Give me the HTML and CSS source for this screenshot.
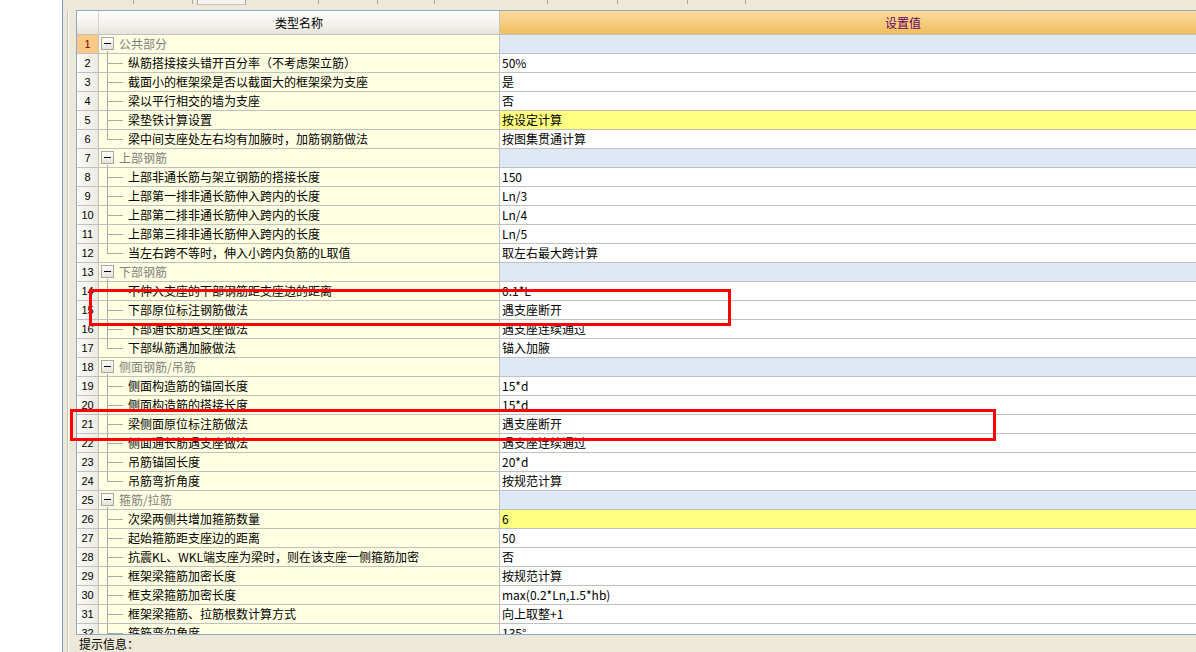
FILE: index.html
```html
<!DOCTYPE html>
<html lang="zh-CN">
<head>
<meta charset="utf-8">
<title>设置</title>
<link rel="stylesheet" href="styles.css">
</head>
<body>
<div class="left"></div>
<div class="main">
  <div class="tabs">
    <div class="tab" style="width:71px"></div>
    <div class="tab" style="width:59px"></div>
    <div class="tabgap"></div>
    <div class="tab sel"></div>
    <div class="tab" style="width:73px"></div>
    <div class="tab" style="width:59px"></div>
    <div class="tab" style="width:57px"></div>
    <div class="tab" style="width:113px"></div>
    <div class="tab" style="width:70px"></div>
    <div class="tab" style="width:70px"></div>
    <div class="tab" style="width:58px"></div>
  </div>
  <div class="area">
    <div class="gutter"></div>
    <div class="content">
      <div class="grid">
        <div class="hdr">
          <div class="h-num"></div>
          <div class="h-name">类型名称</div>
          <div class="h-val">设置值</div>
        </div>
        <div class="row"><div class="num cur">1</div><div class="name grp"><span class="box"></span>公共部分</div><div class="val gv"></div></div>
        <div class="row"><div class="num">2</div><div class="name ch">纵筋搭接接头错开百分率（不考虑架立筋）</div><div class="val">50%</div></div>
        <div class="row"><div class="num">3</div><div class="name ch">截面小的框架梁是否以截面大的框架梁为支座</div><div class="val">是</div></div>
        <div class="row"><div class="num">4</div><div class="name ch">梁以平行相交的墙为支座</div><div class="val">否</div></div>
        <div class="row"><div class="num">5</div><div class="name ch">梁垫铁计算设置</div><div class="val hl">按设定计算</div></div>
        <div class="row"><div class="num">6</div><div class="name ch last">梁中间支座处左右均有加腋时，加筋钢筋做法</div><div class="val">按图集贯通计算</div></div>
        <div class="row"><div class="num">7</div><div class="name grp"><span class="box"></span>上部钢筋</div><div class="val gv"></div></div>
        <div class="row"><div class="num">8</div><div class="name ch">上部非通长筋与架立钢筋的搭接长度</div><div class="val">150</div></div>
        <div class="row"><div class="num">9</div><div class="name ch">上部第一排非通长筋伸入跨内的长度</div><div class="val">Ln/3</div></div>
        <div class="row"><div class="num">10</div><div class="name ch">上部第二排非通长筋伸入跨内的长度</div><div class="val">Ln/4</div></div>
        <div class="row"><div class="num">11</div><div class="name ch">上部第三排非通长筋伸入跨内的长度</div><div class="val">Ln/5</div></div>
        <div class="row"><div class="num">12</div><div class="name ch last">当左右跨不等时，伸入小跨内负筋的L取值</div><div class="val">取左右最大跨计算</div></div>
        <div class="row"><div class="num">13</div><div class="name grp"><span class="box"></span>下部钢筋</div><div class="val gv"></div></div>
        <div class="row"><div class="num">14</div><div class="name ch">不伸入支座的下部钢筋距支座边的距离</div><div class="val">0.1*L</div></div>
        <div class="row"><div class="num">15</div><div class="name ch">下部原位标注钢筋做法</div><div class="val">遇支座断开</div></div>
        <div class="row"><div class="num">16</div><div class="name ch">下部通长筋遇支座做法</div><div class="val">遇支座连续通过</div></div>
        <div class="row"><div class="num">17</div><div class="name ch last">下部纵筋遇加腋做法</div><div class="val">锚入加腋</div></div>
        <div class="row"><div class="num">18</div><div class="name grp"><span class="box"></span>侧面钢筋/吊筋</div><div class="val gv"></div></div>
        <div class="row"><div class="num">19</div><div class="name ch">侧面构造筋的锚固长度</div><div class="val">15*d</div></div>
        <div class="row"><div class="num">20</div><div class="name ch">侧面构造筋的搭接长度</div><div class="val">15*d</div></div>
        <div class="row"><div class="num">21</div><div class="name ch">梁侧面原位标注筋做法</div><div class="val">遇支座断开</div></div>
        <div class="row"><div class="num">22</div><div class="name ch">侧面通长筋遇支座做法</div><div class="val">遇支座连续通过</div></div>
        <div class="row"><div class="num">23</div><div class="name ch">吊筋锚固长度</div><div class="val">20*d</div></div>
        <div class="row"><div class="num">24</div><div class="name ch last">吊筋弯折角度</div><div class="val">按规范计算</div></div>
        <div class="row"><div class="num">25</div><div class="name grp"><span class="box"></span>箍筋/拉筋</div><div class="val gv"></div></div>
        <div class="row"><div class="num">26</div><div class="name ch">次梁两侧共增加箍筋数量</div><div class="val hl">6</div></div>
        <div class="row"><div class="num">27</div><div class="name ch">起始箍筋距支座边的距离</div><div class="val">50</div></div>
        <div class="row"><div class="num">28</div><div class="name ch">抗震KL、WKL端支座为梁时，则在该支座一侧箍筋加密</div><div class="val">否</div></div>
        <div class="row"><div class="num">29</div><div class="name ch">框架梁箍筋加密长度</div><div class="val">按规范计算</div></div>
        <div class="row"><div class="num">30</div><div class="name ch">框支梁箍筋加密长度</div><div class="val">max(0.2*Ln,1.5*hb)</div></div>
        <div class="row"><div class="num">31</div><div class="name ch">框架梁箍筋、拉筋根数计算方式</div><div class="val">向上取整+1</div></div>
        <div class="row"><div class="num">32</div><div class="name ch">箍筋弯勾角度</div><div class="val">135°</div></div>
      </div>
      <div class="status">提示信息：</div>
    </div>
  </div>
</div>
<div class="mark mark1"></div>
<div class="mark mark2"></div>
</body>
</html>
```
FILE: styles.css
```css
html, body {
  margin: 0;
  padding: 0;
}
body {
  width: 1196px;
  height: 652px;
  overflow: hidden;
  display: flex;
  position: relative;
  background: #ece9d8;
  font-family: "Noto Sans CJK SC", "Noto Sans", sans-serif;
  font-size: 12px;
  color: #000;
}
.left {
  flex: none;
  width: 62px;
  background: #fff;
  border-right: 1px solid #7f9db9;
}
.main {
  flex: 1;
  min-width: 0;
  display: flex;
  flex-direction: column;
}
.tabs {
  flex: none;
  height: 10px;
  display: flex;
  align-items: flex-start;
}
.tab {
  height: 4px;
  box-sizing: border-box;
  border-right: 1px solid #aca899;
  flex: none;
}
.tabgap {
  width: 4px;
  flex: none;
}
.tab.sel {
  width: 49px;
  height: 5px;
  border-left: 1px solid #aca899;
  border-bottom: 1px solid #c9c6b6;
  background: #f5f4ee;
}
.area {
  flex: 1;
  display: flex;
  min-height: 0;
}
.gutter {
  flex: none;
  width: 13px;
  box-sizing: border-box;
  padding-left: 4px;
}
.gutter::before {
  content: "";
  display: block;
  width: 1px;
  height: 100%;
  background: #c5c2b2;
  border-right: 1px solid #fff;
}
.content {
  flex: 1;
  min-width: 0;
  display: flex;
  flex-direction: column;
}
.grid {
  flex: none;
  height: 625px;
  box-sizing: border-box;
  border-top: 1px solid #8fa8c6;
  border-left: 1px solid #8fa8c6;
  border-bottom: 1px solid #8fa8c6;
  background: #fff;
  overflow: hidden;
}
.hdr, .row {
  display: grid;
  grid-template-columns: 22px 401px 1fr;
}
.hdr {
  height: 24px;
}
.hdr > div {
  box-sizing: border-box;
  border-bottom: 1px solid #c0c0c0;
  display: flex;
  align-items: center;
  line-height: 23px;
}
.h-num, .h-name {
  background: linear-gradient(#ffffff, #f2f1eb 60%, #e6e4dc);
}
.h-num {
  border-right: 1px solid #d6d4cc;
}
.h-name {
  justify-content: center;
  border-right: 1px solid #c8c6bc;
}
.h-val {
  justify-content: center;
  padding-left: 110px;
  color: #660066;
  background: linear-gradient(#fadb9e, #f4c772 70%, #f0bd5c);
}
.row {
  height: 19px;
}
.row > div {
  box-sizing: border-box;
  border-bottom: 1px solid #c0c0c0;
  display: flex;
  align-items: center;
  white-space: nowrap;
  overflow: hidden;
  line-height: 18px;
}
.num {
  justify-content: center;
  font-family: "Liberation Sans", "DejaVu Sans", sans-serif;
  font-size: 11px;
  color: #000;
  background: linear-gradient(to right, #fbfbf8, #ecebe3);
  border-right: 1px solid #c0c0c0;
}
.num.cur {
  background: #f9c986;
  color: #800000;
}
.name {
  background-color: #ffffe1;
  border-right: 1px solid #c0c0c0;
}
.name.ch {
  padding-left: 29px;
  background-image:
    linear-gradient(#a8a8a8, #a8a8a8),
    linear-gradient(#a8a8a8, #a8a8a8);
  background-repeat: no-repeat;
  background-position: 8px 0, 8px 9px;
  background-size: 1px 100%, 16px 1px;
}
.name.ch.last {
  background-size: 1px 10px, 16px 1px;
}
.name.grp {
  color: #808080;
  padding-left: 2px;
  background-image: linear-gradient(#a8a8a8, #a8a8a8);
  background-repeat: no-repeat;
  background-position: 8px 16px;
  background-size: 1px 4px;
}
.box {
  flex: none;
  width: 13px;
  height: 13px;
  box-sizing: border-box;
  border: 1px solid #a6a6a6;
  background: linear-gradient(#ffffff, #e4e3dc);
  margin-right: 5px;
  margin-top: -2px;
  display: flex;
  align-items: center;
  justify-content: center;
}
.box::before {
  content: "";
  width: 7px;
  height: 1px;
  background: #000;
}
.val {
  padding-left: 2px;
  background: #fff;
}
.val.gv {
  background: #dfe8f5;
}
.val.hl {
  background: #ffff80;
}
.status {
  flex: 1;
  padding-left: 3px;
  display: flex;
  align-items: center;
  line-height: 17px;
}
.mark {
  position: absolute;
  box-sizing: border-box;
  border: 3px solid #ff0000;
  pointer-events: none;
}
.mark1 {
  left: 89px;
  top: 289px;
  width: 642px;
  height: 37px;
}
.mark2 {
  left: 70px;
  top: 409px;
  width: 926px;
  height: 32px;
}
```
